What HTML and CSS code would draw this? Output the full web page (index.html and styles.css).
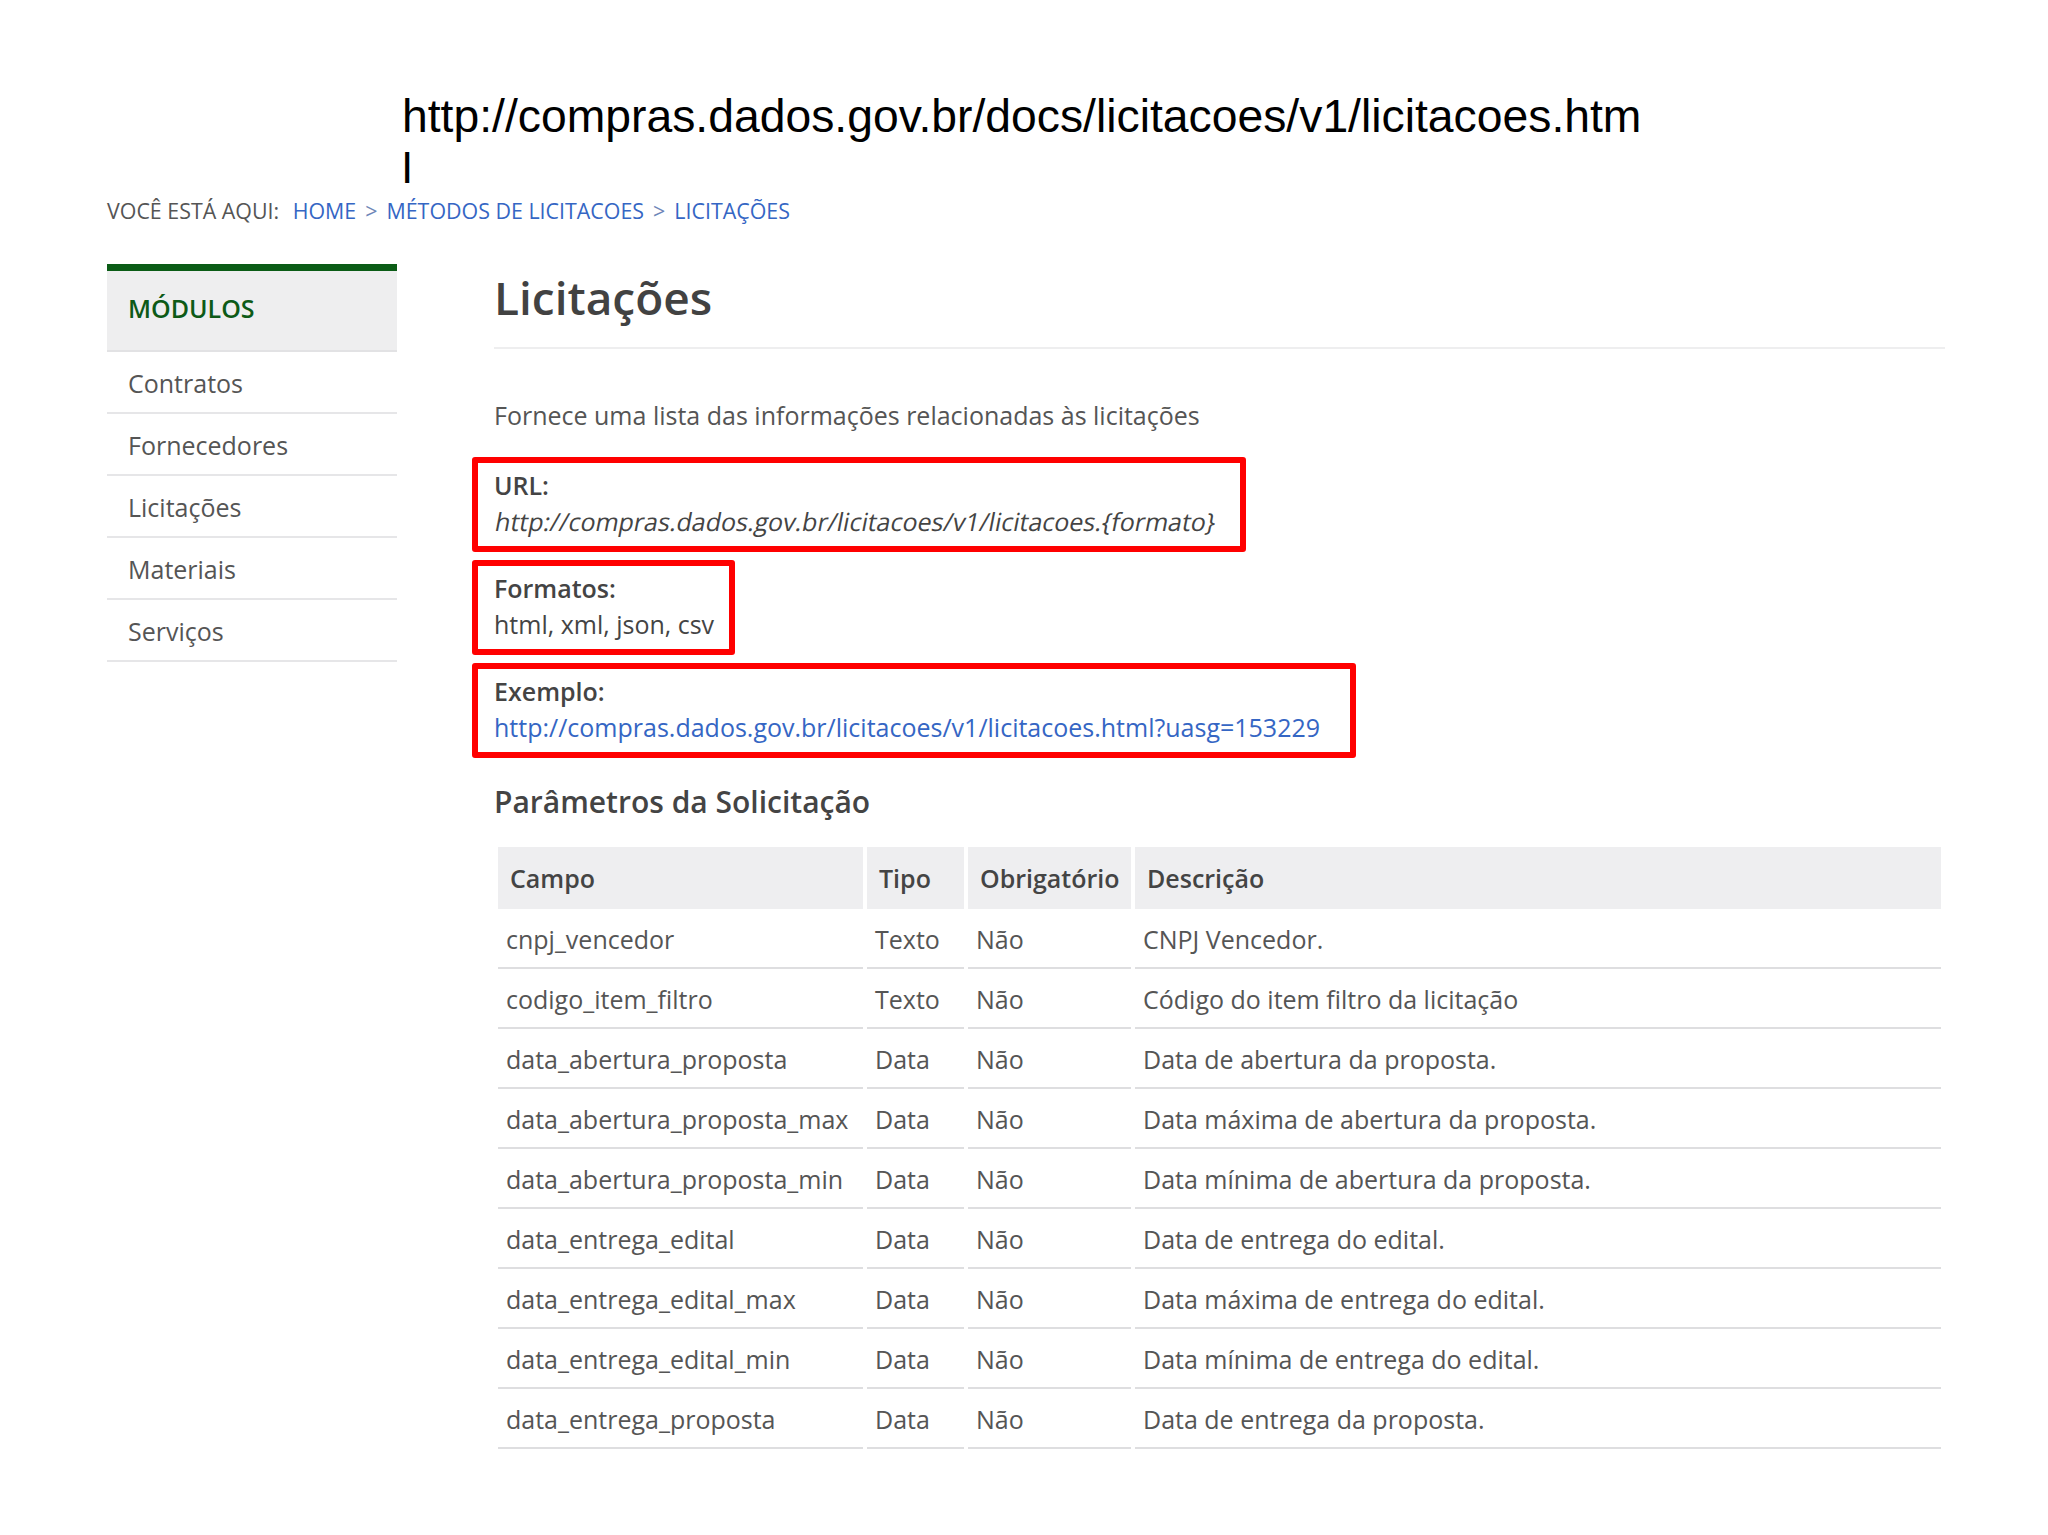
FILE: index.html
```html
<!DOCTYPE html>
<html lang="pt-BR">
<head>
<meta charset="utf-8">
<title>Licitações</title>
<link rel="stylesheet" href="styles.css">
</head>
<body>
<div class="slide-title">http://compras.dados.gov.br/docs/licitacoes/v1/licitacoes.html</div>

<div class="shot">
  <div class="crumbs">
    <span class="crumbs-label">VOCÊ ESTÁ AQUI:</span>
    <a class="crumb" href="#">HOME</a><span class="sep">&gt;</span><a class="crumb" href="#">MÉTODOS DE LICITACOES</a><span class="sep">&gt;</span><a class="crumb" href="#">LICITAÇÕES</a>
  </div>

  <div class="layout">
    <aside class="sidebar">
      <div class="side-head">MÓDULOS</div>
      <ul class="side-list">
        <li class="side-item">Contratos</li>
        <li class="side-item">Fornecedores</li>
        <li class="side-item">Licitações</li>
        <li class="side-item">Materiais</li>
        <li class="side-item">Serviços</li>
      </ul>
    </aside>

    <main class="content">
      <h1 class="title">Licitações</h1>
      <p class="lead">Fornece uma lista das informações relacionadas às licitações</p>

      <div class="box box-url">
        <div class="box-label">URL:</div>
        <div class="box-value"><span class="oblique">http://compras.dados.gov.br/licitacoes/v1/licitacoes.{formato}</span></div>
      </div>
      <div class="box box-fmt">
        <div class="box-label">Formatos:</div>
        <div class="box-value">html, xml, json, csv</div>
      </div>
      <div class="box box-ex">
        <div class="box-label">Exemplo:</div>
        <div class="box-value"><a class="link" href="#">http://compras.dados.gov.br/licitacoes/v1/licitacoes.html?uasg=153229</a></div>
      </div>

      <h2 class="subtitle">Parâmetros da Solicitação</h2>

      <table class="params">
        <colgroup>
          <col class="c-campo"><col class="c-tipo"><col class="c-obr"><col class="c-desc">
        </colgroup>
        <thead>
          <tr><th>Campo</th><th>Tipo</th><th>Obrigatório</th><th>Descrição</th></tr>
        </thead>
        <tbody>
          <tr><td>cnpj_vencedor</td><td>Texto</td><td>Não</td><td>CNPJ Vencedor.</td></tr>
          <tr><td>codigo_item_filtro</td><td>Texto</td><td>Não</td><td>Código do item filtro da licitação</td></tr>
          <tr><td>data_abertura_proposta</td><td>Data</td><td>Não</td><td>Data de abertura da proposta.</td></tr>
          <tr><td>data_abertura_proposta_max</td><td>Data</td><td>Não</td><td>Data máxima de abertura da proposta.</td></tr>
          <tr><td>data_abertura_proposta_min</td><td>Data</td><td>Não</td><td>Data mínima de abertura da proposta.</td></tr>
          <tr><td>data_entrega_edital</td><td>Data</td><td>Não</td><td>Data de entrega do edital.</td></tr>
          <tr><td>data_entrega_edital_max</td><td>Data</td><td>Não</td><td>Data máxima de entrega do edital.</td></tr>
          <tr><td>data_entrega_edital_min</td><td>Data</td><td>Não</td><td>Data mínima de entrega do edital.</td></tr>
          <tr><td>data_entrega_proposta</td><td>Data</td><td>Não</td><td>Data de entrega da proposta.</td></tr>
        </tbody>
      </table>
    </main>
  </div>
</div>
</body>
</html>
```

FILE: styles.css
```css
html, body {
  margin: 0;
  padding: 0;
  background: #ffffff;
}

body {
  width: 2048px;
  min-height: 1535px;
  font-family: "Open Sans", "Noto Sans", sans-serif;
  color: #555;
}

.slide-title {
  margin-left: 402px;
  padding-top: 89px;
  width: 1248px;
  height: 94px;
  overflow: hidden;
  font-family: "Liberation Sans", Arial, sans-serif;
  font-size: 46.3px;
  line-height: 54px;
  color: #000;
  word-break: break-all;
}

.shot {
  padding-left: 107px;
}

.crumbs {
  margin-top: 14px;
  font-size: 21.4px;
  line-height: 28px;
  color: #555;
  white-space: nowrap;
}

.crumbs-label {
  margin-right: 8px;
}

.crumb {
  color: #3566c4;
  text-decoration: none;
}

.sep {
  color: #6d86b8;
  margin: 0 9px;
}

.layout {
  display: flex;
  align-items: flex-start;
  gap: 97px;
  margin-top: 39px;
}

.sidebar {
  width: 290px;
  flex: none;
  border-top: 7px solid #0b5c16;
}

.side-head {
  height: 79px;
  line-height: 75px;
  padding-left: 21px;
  background: #eeeeef;
  border-bottom: 2px solid #e2e2e4;
  font-size: 25px;
  font-weight: 600;
  color: #0d5a17;
}

.side-list {
  list-style: none;
  margin: 0;
  padding: 0;
}

.side-item {
  height: 60px;
  line-height: 62px;
  padding-left: 21px;
  border-bottom: 2px solid #e6e6e8;
  font-size: 25px;
  color: #555;
}

.content {
  width: 1451px;
  flex: none;
}

.title {
  margin: 9px 0 0;
  padding-bottom: 26px;
  border-bottom: 2px solid #eeeeef;
  font-size: 46px;
  line-height: 48px;
  font-weight: 600;
  color: #424242;
}

.lead {
  margin: 48px 0 24px;
  font-size: 25px;
  line-height: 36px;
  color: #555;
}

.box {
  box-sizing: border-box;
  margin-left: -22px;
  margin-bottom: 8px;
  padding: 4px 10px 7px 16px;
  border: 6px solid #ff0000;
  border-radius: 3px;
  font-size: 25px;
  line-height: 36px;
  white-space: nowrap;
}

.box-url { width: 774px; }
.box-fmt { width: 263px; }
.box-ex  { width: 884px; }

.box-label {
  font-weight: 600;
  color: #444;
}

.box-value {
  color: #444;
}

.oblique {
  display: inline-block;
  transform: skewX(-11deg);
  transform-origin: 0 75%;
}

.link {
  color: #3566c4;
  text-decoration: none;
}

.subtitle {
  margin: 24px 0 25px;
  font-size: 30px;
  line-height: 40px;
  font-weight: 600;
  color: #444;
}

.params {
  width: 1451px;
  border-collapse: separate;
  border-spacing: 4px 0;
  table-layout: fixed;
  font-size: 25px;
}

.c-campo { width: 365px; }
.c-tipo  { width: 97px; }
.c-obr   { width: 163px; }

.params th {
  height: 62px;
  padding: 0 0 0 12px;
  background: #eeeef0;
  text-align: left;
  font-weight: 600;
  color: #444;
  line-height: 62px;
  white-space: nowrap;
}

.params td {
  height: 58px;
  padding: 2px 0 0 8px;
  box-sizing: border-box;
  line-height: 56px;
  border-bottom: 2px solid #dedee0;
  color: #555;
  white-space: nowrap;
}
```
